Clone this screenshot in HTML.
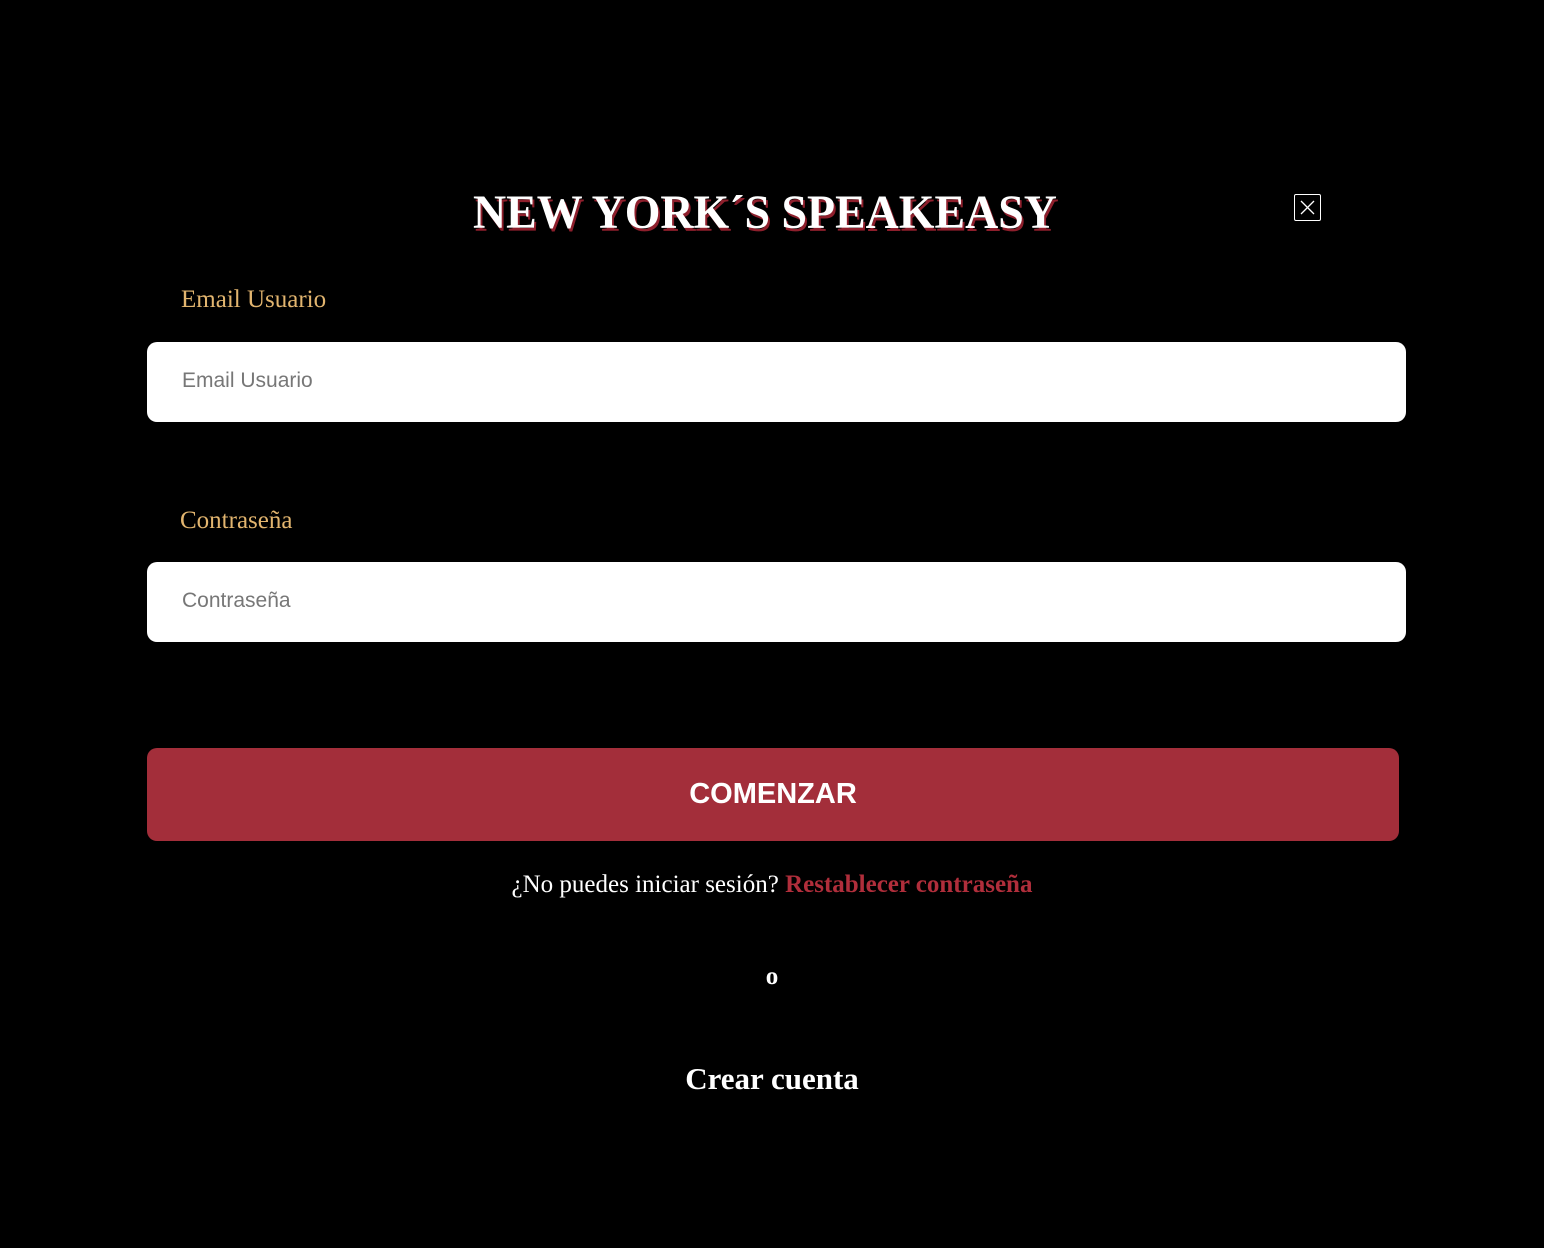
<!DOCTYPE html>
<html><head><meta charset="utf-8"><style>
body{margin:0;background:#000;width:1544px;height:1248px;position:relative;overflow:hidden;font-family:"Liberation Serif",serif}
.a{position:absolute}
h1{position:absolute;left:473px;top:185px;margin:0;font:bold 48px "Liberation Serif",serif;color:#fff;text-shadow:2px 3px 0 #8e1f2c;white-space:nowrap;transform-origin:left top;transform:scaleX(0.956);line-height:56px}
.lbl{color:#e2b56f;font-size:25px}
.inp{left:147px;width:1259px;height:80px;background:#fff;border-radius:10px}
.inp span{position:absolute;left:35px;top:27px;font:21px "Liberation Sans",sans-serif;color:#777}
</style></head><body>
<h1>NEW YORK´S SPEAKEASY</h1>
<div class="a" style="left:1294px;top:194px;width:25px;height:25px;border:1px solid #fff;border-radius:2px">
<svg width="25" height="25" viewBox="0 0 25 25"><path d="M6 6L19 19M19 6L6 19" stroke="#fff" stroke-width="1.3"/></svg></div>
<div class="a lbl" style="left:181px;top:286px">Email Usuario</div>
<div class="a inp" style="top:342px"><span>Email Usuario</span></div>
<div class="a lbl" style="left:180px;top:507px">Contraseña</div>
<div class="a inp" style="top:562px"><span>Contraseña</span></div>
<div class="a" style="left:147px;top:748px;width:1252px;height:93px;background:#a32e3a;border-radius:10px;color:#fff;font:bold 29px 'Liberation Sans',sans-serif;text-align:center;line-height:93px">COMENZAR</div>
<div class="a" style="left:0;width:1544px;top:871px;text-align:center;color:#fff;font-size:25px">¿No puedes iniciar sesión? <b style="color:#b02e3b">Restablecer contraseña</b></div>
<div class="a" style="left:0;width:1544px;top:963px;text-align:center;color:#fff;font-size:25px;font-weight:bold">o</div>
<div class="a" style="left:0;width:1544px;top:1061px;text-align:center;color:#fff;font-size:31px;font-weight:bold">Crear cuenta</div>
</body></html>
